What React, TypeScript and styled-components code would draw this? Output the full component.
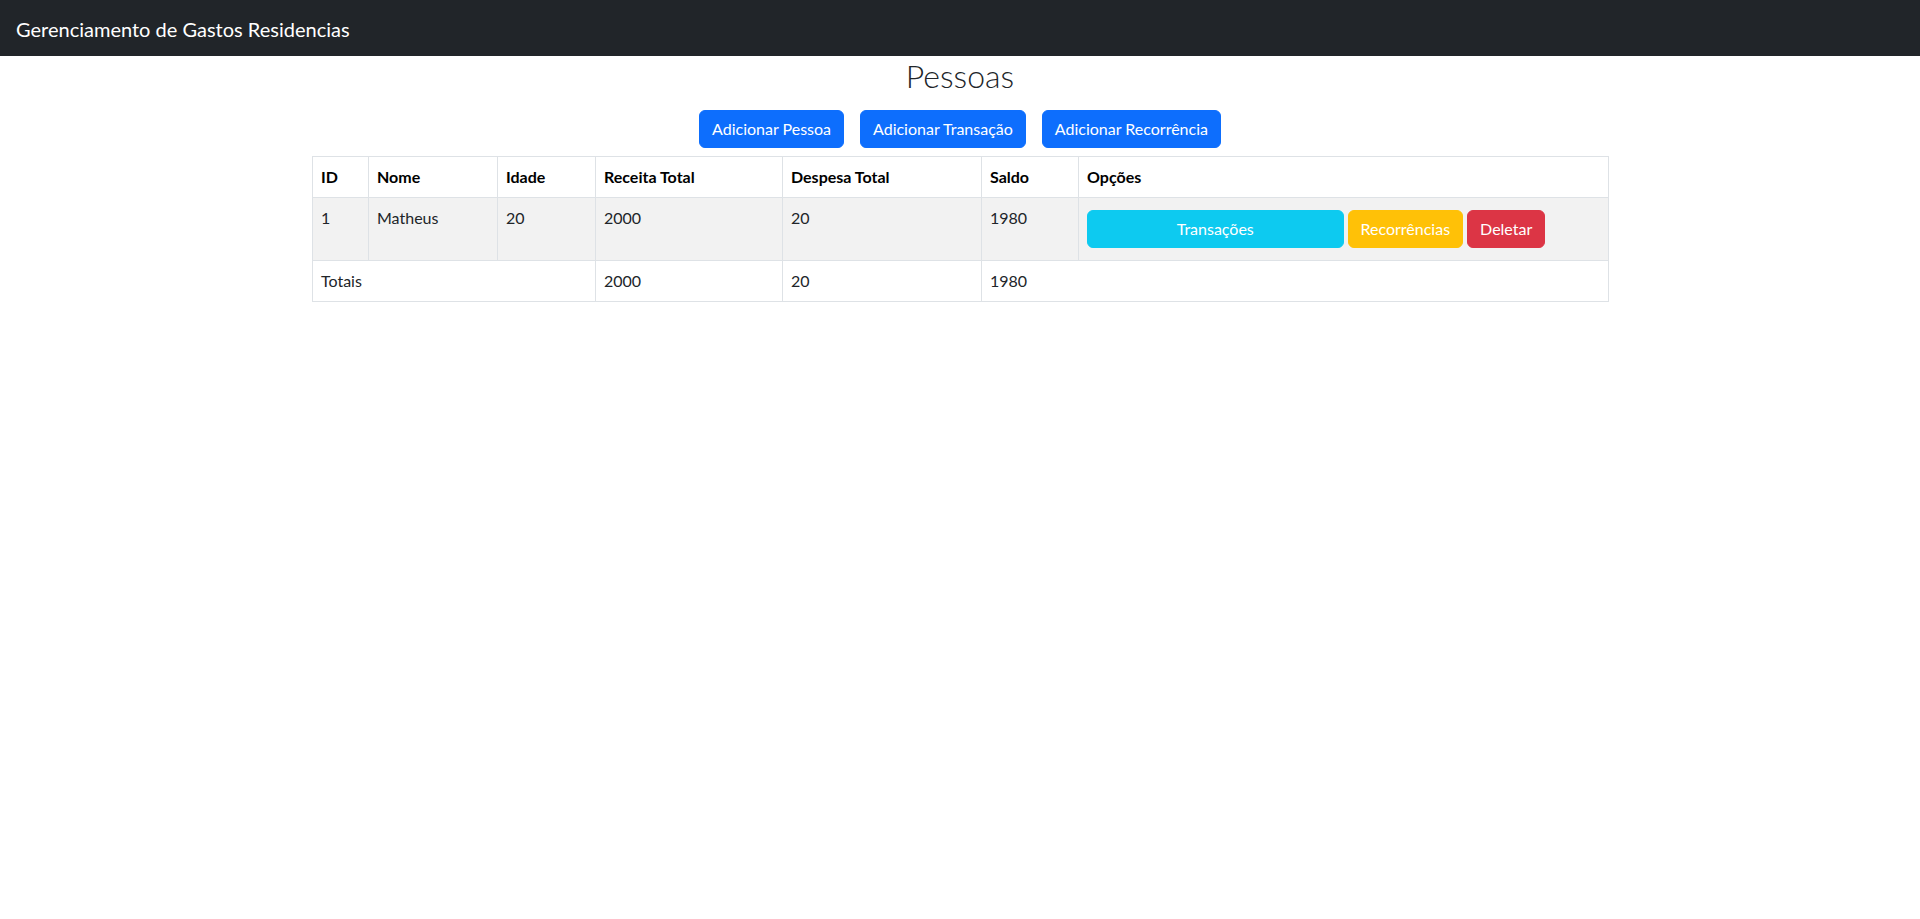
import React from "react";
import styled, { createGlobalStyle } from "styled-components";

const GlobalStyle = createGlobalStyle`
  * { box-sizing: border-box; }
  body {
    margin: 0;
    font-family: "Lato", "Liberation Sans", sans-serif;
    font-size: 16px;
    line-height: 1.5;
    color: #212529;
    background: #fff;
  }
`;

const Navbar = styled.nav`
  height: 56px;
  background: #212529;
  display: flex;
  align-items: center;
  padding: 2px 16px 0;
`;

const Brand = styled.span`
  font-size: 20px;
  line-height: 30px;
  color: #fff;
`;

const Container = styled.main`
  max-width: 1320px;
  margin: 0 auto;
  padding: 0 12px;
`;

const Title = styled.h2`
  margin: 1px 0 15px;
  font-size: 32px;
  font-weight: 300;
  line-height: 38px;
  text-align: center;
  color: #212529;
`;

const Toolbar = styled.div`
  display: flex;
  justify-content: center;
  gap: 16px;
  margin-bottom: 8px;
`;

type Variant = "primary" | "info" | "warning" | "danger";
const colors: Record<Variant, string> = {
  primary: "#0d6efd",
  info: "#0dcaf0",
  warning: "#ffc107",
  danger: "#dc3545",
};

const Button = styled.button<{ $variant: Variant; $half?: boolean }>`
  height: 38px;
  padding: 6px 12px;
  border: 1px solid ${(p) => colors[p.$variant]};
  border-radius: 6px;
  background: ${(p) => colors[p.$variant]};
  color: #fff;
  font-family: inherit;
  font-size: 16px;
  line-height: 24px;
  cursor: pointer;
  width: ${(p) => (p.$half ? "50%" : "auto")};
  flex: none;
`;

const Table = styled.table`
  width: 100%;
  border-collapse: collapse;
  table-layout: fixed;
`;

const Col = styled.col<{ $w: number }>`
  width: ${(p) => p.$w}px;
`;

const Tr = styled.tr<{ $striped?: boolean }>`
  background: ${(p) => (p.$striped ? "#f2f2f2" : "#fff")};
`;

const Th = styled.th`
  border: 1px solid #dee2e6;
  padding: 8px;
  text-align: left;
  vertical-align: top;
  font-weight: 700;
  color: #000;
`;

const Td = styled.td`
  border: 1px solid #dee2e6;
  padding: 8px;
  text-align: left;
  vertical-align: top;
  color: #212529;
`;

const Actions = styled.div`
  display: flex;
  gap: 4px;
  padding: 4px 0;
`;

const widths = [56, 129, 98, 187, 199, 97, 530];

export default function App() {
  return (
    <>
      <GlobalStyle />
      <Navbar>
        <Brand>Gerenciamento de Gastos Residencias</Brand>
      </Navbar>
      <Container>
        <Title>Pessoas</Title>
        <Toolbar>
          <Button $variant="primary">Adicionar Pessoa</Button>
          <Button $variant="primary">Adicionar Transação</Button>
          <Button $variant="primary">Adicionar Recorrência</Button>
        </Toolbar>
        <Table>
          <colgroup>
            {widths.map((w, i) => (
              <Col key={i} $w={w} />
            ))}
          </colgroup>
          <thead>
            <Tr>
              <Th>ID</Th>
              <Th>Nome</Th>
              <Th>Idade</Th>
              <Th>Receita Total</Th>
              <Th>Despesa Total</Th>
              <Th>Saldo</Th>
              <Th>Opções</Th>
            </Tr>
          </thead>
          <tbody>
            <Tr $striped>
              <Td>1</Td>
              <Td>Matheus</Td>
              <Td>20</Td>
              <Td>2000</Td>
              <Td>20</Td>
              <Td>1980</Td>
              <Td>
                <Actions>
                  <Button $variant="info" $half>
                    Transações
                  </Button>
                  <Button $variant="warning">Recorrências</Button>
                  <Button $variant="danger">Deletar</Button>
                </Actions>
              </Td>
            </Tr>
            <Tr>
              <Td colSpan={3}>Totais</Td>
              <Td>2000</Td>
              <Td>20</Td>
              <Td colSpan={2}>1980</Td>
            </Tr>
          </tbody>
        </Table>
      </Container>
    </>
  );
}
